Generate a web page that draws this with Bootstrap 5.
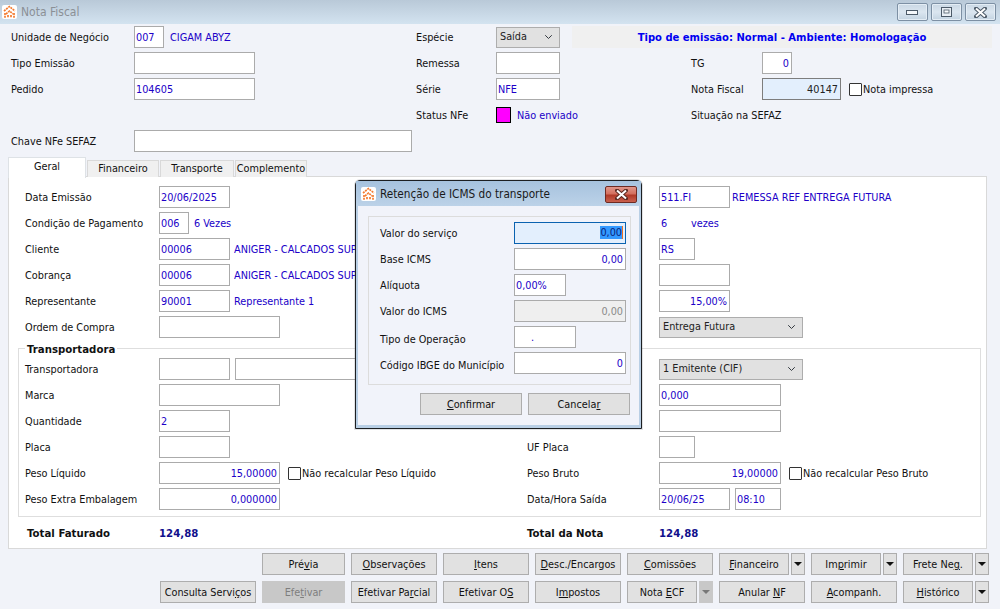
<!DOCTYPE html>
<html lang="pt-BR">
<head>
<meta charset="utf-8">
<title>Nota Fiscal</title>
<link href="https://cdn.jsdelivr.net/npm/bootstrap@5.3.0/dist/css/bootstrap.min.css" rel="stylesheet">
<style>
html,body{margin:0;height:100%;overflow:hidden;background:#f1f3f9}
body{font-family:"DejaVu Sans Condensed","Liberation Sans",sans-serif;font-size:10.8px;line-height:14px;color:#111}
.winbox{position:relative;width:1000px;height:609px;background:#f1f3f9;overflow:hidden}
.ttlbar{height:24px;background:linear-gradient(#b9c9d8,#d3e3f0);padding-left:2px}
.ttltxt{font-size:12px;color:#8b9096;margin-left:4px}
.logo{width:15px;height:14px;flex:none;background:#fff;border-radius:2px}
.capbtns{gap:3px;margin-right:4px;margin-top:3px;align-self:flex-start}
.capbtn{width:31px;height:18px;border:1px solid #7d90a4;border-radius:2px;background:linear-gradient(#c9d7e4 0,#dbe6f0 50%,#c3d3e1 100%);padding:0;box-shadow:inset 0 0 0 1px #e4edf5}
.hgrid{display:grid;grid-template-columns:123px 282px 80px 195px 71px 1fr;grid-auto-rows:22px;row-gap:4px;align-items:center;padding:2px 8px 0 11px;height:133px;white-space:nowrap}
.pgrid{display:grid;grid-template-columns:134px 368px 132px 1fr;grid-auto-rows:22px;row-gap:4px;align-items:center;white-space:nowrap}
.tx{padding-top:2px}
.tx6{padding-top:6px}
.spanrest{grid-column:span 3}
.blu{color:#2000c8}
.fld.form-control{height:22px;min-height:22px;border:1px solid #ababab;border-radius:0;padding:1px 2px 0 1px;font:inherit;color:#2000c8;background:#fff;box-shadow:none;width:100%}
.fld.alr{text-align:right}
.fld.hi.form-control{background:#e3effd;border-color:#7d7d7d;color:#222}
.fld.off.form-control{background:#efefef;color:#8a8a8a}
.fld.foc.form-control{background:#e3effd;border:1px solid #0a62b0;line-height:18px}
.sel{background:#3399ff;color:#0a1f7a;border-right:1px solid #f07020}
.cmb.form-select{height:21px;min-height:21px;padding:0 16px 0 3px;border:1px solid #adadad;border-radius:0;background-color:#e1e1e1;background-position:right 5px center;background-size:11px 8px;font:inherit;color:#222;box-shadow:none}
.wd30{width:30px!important}.wd36{width:36px!important}.wd46{width:46px!important}.wd52{width:52px!important}.wd62{width:62px!important}.wd64{width:64px!important}.wd71{width:71px!important}.wd79{width:79px!important}.wd112{width:112px!important}.wd121{width:121px!important}.wd122{width:122px!important}.wd144{width:144px!important}.wd200{width:200px!important}.wd278{width:278px!important}
.ml2{margin-left:2px}.ml5{margin-left:5px}.ml6{margin-left:6px}
.banner{margin-left:12px;height:22px;padding-top:1px;background:#f0f0f0;color:#0000f0;font-weight:700;text-align:center;line-height:22px;font-family:"DejaVu Sans",sans-serif;font-size:10px;white-space:nowrap;width:420px}
.stbox{width:15px;height:16px;background:#f0f;border:1px solid #000}
.chk{width:13px;height:13px;border:1px solid #333;border-radius:1px;background:#fff;flex:none;margin-right:1px}
.tabsx{margin-left:8px;border:0;height:20px;position:relative;z-index:2;align-items:flex-end;gap:1px}
.tabsx .nav-link{height:17px;padding:0;border:1px solid #d9d9d9;border-bottom:0;border-radius:0;background:#f0f0f0;color:#111;font-size:10.8px;text-align:center;line-height:16px;margin:0;width:72px;white-space:nowrap}
.tabsx .nav-item:nth-child(3) .nav-link{width:74px}
.tabsx .nav-link.active{height:21px;width:78px;background:#fff;color:#111;line-height:18px;margin-bottom:-1px}
.pnl{margin-left:8px;width:979px;height:373px;background:#fff;border:1px solid #d9d9d9;padding-top:9px;margin-top:-1px}
.lft{margin-left:16px}
.grp{position:relative;margin:10px 0 0 9px;width:963px;height:169px;border:1px solid #dedede;padding:9px 0 0 6px}
.lgd{position:absolute;left:6px;top:-6px;background:#fff;padding:0 2px;font-weight:700;font-family:"DejaVu Sans",sans-serif;font-size:10.2px;line-height:13px}
.tot{margin-top:5px;font-weight:700;font-family:"DejaVu Sans",sans-serif;font-size:10.2px}
.tot1{padding-left:2px}
.totv{color:#10108c}
.lnk{white-space:nowrap;overflow:hidden}
.barbtns{padding:4px 11px 0 0;gap:6px}
.barbtns.nxt{padding-top:6px}
.wbtn.btn{height:22px;padding:2px 0 0;border:1px solid #adadad;border-radius:0;background:#e1e1e1;color:#111;font-size:10.8px;line-height:16px;white-space:nowrap}
.wbtn.btn:disabled{opacity:1;background:#c8c8c8;border-color:#c8c8c8;color:#7e7e7e}
.w83{width:83px}.w86{width:86px}.w70{width:70px}.w96{width:96px}.w14{width:14px}.w102{width:102px}
.splt{gap:2px}
.tri{display:inline-block;width:0;height:0;border-left:4px solid transparent;border-right:4px solid transparent;border-top:4px solid #111;vertical-align:2px}
.wbtn.btn:disabled .tri{border-top-color:#777}
.dlg{position:absolute;left:355px;top:180px;width:287px;height:249px;z-index:5;background:#b9cfe5;border:1px solid #1c1f22;border-radius:5px 5px 0 0;box-shadow:0 0 0 1px rgba(60,70,80,.15)}
.dlgttl{height:25px;background:linear-gradient(#a6c2de,#bcd2e8);padding-left:5px}
.dlgtxt{font-size:11.7px;color:#1a1a1a;margin-left:4px;padding-top:1px;white-space:nowrap}
.dlgx{width:32px;height:17px;margin:5px 4px 0 auto;align-self:flex-start;border:1px solid #6e2a22;border-radius:2px;background:linear-gradient(#e0968a 0,#d4705f 45%,#b03a28 55%,#c9604e 100%);padding:0}
.dlgbody{margin:0 2px 2px;height:219px;background:#f1f3fa;padding:10px 0 0 10px}
.frm{width:263px;height:169px;border:1px solid #dcdcdc;padding:5px 0 0 11px;display:grid;grid-template-columns:134px 112px;grid-auto-rows:22px;row-gap:4px;align-items:center;white-space:nowrap}
.dlgbtns{gap:6px;margin:8px 0 0 52px}
</style>
</head>
<body>
<div class="winbox">
  <div class="ttlbar d-flex align-items-center">
    <svg class="logo" viewBox="0 0 15 14"><g fill="none" stroke="#f47b30" stroke-width="1.7" stroke-dasharray="2 .8"><path d="M2 6 7.5 1.5 13 6"/><path d="M4 9 7.5 6 11 9"/><path d="M3 8v5M6 10v3M9 10v3M12 8v5"/></g></svg>
    <span class="ttltxt">Nota Fiscal</span>
    <div class="capbtns d-flex ms-auto">
      <button type="button" class="capbtn d-flex align-items-center justify-content-center" aria-label="Minimizar"><svg width="13" height="8" viewBox="0 0 13 8"><rect x=".5" y="2.5" width="11" height="4" fill="#f4f7fa" stroke="#4c5a68"/></svg></button>
      <button type="button" class="capbtn d-flex align-items-center justify-content-center" aria-label="Maximizar"><svg width="11" height="10" viewBox="0 0 11 10"><rect x=".5" y=".5" width="10" height="9" fill="#e8eef4" stroke="#4c5a68"/><rect x="3" y="3" width="5" height="3" fill="#f8fafc" stroke="#4c5a68" stroke-width=".8"/></svg></button>
      <button type="button" class="capbtn d-flex align-items-center justify-content-center" aria-label="Fechar"><svg width="13" height="11" viewBox="0 0 13 11"><path d="M2 1.5 11 9.5M11 1.5 2 9.5" stroke="#4c5a68" stroke-width="4" stroke-linecap="round"/><path d="M2 1.5 11 9.5M11 1.5 2 9.5" stroke="#fff" stroke-width="2"/></svg></button>
    </div>
  </div>

  <div class="hgrid">
    <span class="tx">Unidade de Negócio</span>
    <div class="d-flex align-items-center"><input class="form-control fld wd30" value="007"><span class="blu tx ml6">CIGAM ABYZ</span></div>
    <span class="tx">Espécie</span>
    <div class="d-flex align-items-center spanrest"><select class="form-select cmb wd64"><option>Saída</option></select><div class="banner">Tipo de emissão: Normal - Ambiente: Homologação</div></div>

    <span class="tx">Tipo Emissão</span>
    <div><input class="form-control fld wd121" value=""></div>
    <span class="tx">Remessa</span>
    <div><input class="form-control fld wd64" value=""></div>
    <span class="tx">TG</span>
    <div><input class="form-control fld alr wd30" value="0"></div>

    <span class="tx">Pedido</span>
    <div><input class="form-control fld wd121" value="104605"></div>
    <span class="tx">Série</span>
    <div><input class="form-control fld wd64" value="NFE"></div>
    <span class="tx">Nota Fiscal</span>
    <div class="d-flex align-items-center"><input class="form-control fld hi alr wd79" value="40147"><span class="chk ms-2"></span><span class="tx">Nota impressa</span></div>

    <span></span><span></span>
    <span class="tx">Status NFe</span>
    <div class="d-flex align-items-center"><span class="stbox"></span><span class="blu tx ml6">Não enviado</span></div>
    <span class="tx">Situação na SEFAZ</span><span></span>

    <span class="tx">Chave NFe SEFAZ</span>
    <div><input class="form-control fld wd278" value=""></div>
  </div>

  <ul class="nav nav-tabs tabsx">
    <li class="nav-item"><a class="nav-link active" href="#">Geral</a></li>
    <li class="nav-item"><a class="nav-link" href="#">Financeiro</a></li>
    <li class="nav-item"><a class="nav-link" href="#">Transporte</a></li>
    <li class="nav-item"><a class="nav-link" href="#">Complemento</a></li>
  </ul>

  <div class="pnl">
    <div class="pgrid lft">
      <span class="tx">Data Emissão</span><div><input class="form-control fld wd71" value="20/06/2025"></div>
      <span></span><div class="d-flex align-items-center"><input class="form-control fld wd71" value="511.FI"><span class="blu tx ml2">REMESSA REF ENTREGA FUTURA</span></div>

      <span class="tx">Condição de Pagamento</span><div class="d-flex align-items-center"><input class="form-control fld wd30" value="006"><span class="blu tx ml5">6 Vezes</span></div>
      <span></span><div class="blu d-flex tx"><span class="wd30 ml2">6</span><span>vezes</span></div>

      <span class="tx">Cliente</span><div class="d-flex align-items-center"><input class="form-control fld wd71" value="00006"><span class="blu tx lnk ms-1">ANIGER - CALCADOS SUP</span></div>
      <span></span><div><input class="form-control fld wd36" value="RS"></div>

      <span class="tx">Cobrança</span><div class="d-flex align-items-center"><input class="form-control fld wd71" value="00006"><span class="blu tx lnk ms-1">ANIGER - CALCADOS SUP</span></div>
      <span></span><div><input class="form-control fld wd71" value=""></div>

      <span class="tx">Representante</span><div class="d-flex align-items-center"><input class="form-control fld wd71" value="90001"><span class="blu tx ms-1">Representante 1</span></div>
      <span></span><div><input class="form-control fld alr wd71" value="15,00%"></div>

      <span class="tx">Ordem de Compra</span><div><input class="form-control fld wd121" value=""></div>
      <span></span><div><select class="form-select cmb wd144"><option>Entrega Futura</option></select></div>
    </div>

    <div class="grp">
      <div class="lgd">Transportadora</div>
      <div class="pgrid">
        <span class="tx">Transportadora</span><div class="d-flex align-items-center"><input class="form-control fld wd71" value=""><input class="form-control fld wd200 ml5" value=""></div>
        <span></span><div><select class="form-select cmb wd144"><option>1 Emitente (CIF)</option></select></div>

        <span class="tx">Marca</span><div><input class="form-control fld wd121" value=""></div>
        <span></span><div><input class="form-control fld wd122" value="0,000"></div>

        <span class="tx">Quantidade</span><div><input class="form-control fld wd71" value="2"></div>
        <span></span><div><input class="form-control fld wd122" value=""></div>

        <span class="tx">Placa</span><div><input class="form-control fld wd71" value=""></div>
        <span class="tx">UF Placa</span><div><input class="form-control fld wd36" value=""></div>

        <span class="tx">Peso Líquido</span><div class="d-flex align-items-center"><input class="form-control fld alr wd121" value="15,00000"><span class="chk ms-2"></span><span class="tx">Não recalcular Peso Líquido</span></div>
        <span class="tx">Peso Bruto</span><div class="d-flex align-items-center"><input class="form-control fld alr wd122" value="19,00000"><span class="chk ms-2"></span><span class="tx">Não recalcular Peso Bruto</span></div>

        <span class="tx">Peso Extra Embalagem</span><div><input class="form-control fld alr wd121" value="0,000000"></div>
        <span class="tx">Data/Hora Saída</span><div class="d-flex align-items-center"><input class="form-control fld wd71" value="20/06/25"><input class="form-control fld wd46 ml5" value="08:10"></div>
      </div>
    </div>

    <div class="pgrid lft tot">
      <span class="tx tot1">Total Faturado</span><span class="tx totv">124,88</span>
      <span class="tx">Total da Nota</span><span class="tx totv">124,88</span>
    </div>
  </div>

  <div class="barbtns d-flex justify-content-end">
    <button type="button" class="btn wbtn w83">Pré<u>v</u>ia</button>
    <button type="button" class="btn wbtn w86"><u>O</u>bservações</button>
    <button type="button" class="btn wbtn w86"><u>I</u>tens</button>
    <button type="button" class="btn wbtn w86"><u>D</u>esc./Encargos</button>
    <button type="button" class="btn wbtn w86"><u>C</u>omissões</button>
    <div class="d-flex splt"><button type="button" class="btn wbtn w70"><u>F</u>inanceiro</button><button type="button" class="btn wbtn w14" aria-label="Mais"><span class="tri"></span></button></div>
    <div class="d-flex splt"><button type="button" class="btn wbtn w70">Im<u>p</u>rimir</button><button type="button" class="btn wbtn w14" aria-label="Mais"><span class="tri"></span></button></div>
    <div class="d-flex splt"><button type="button" class="btn wbtn w70">Frete Ne<u>g</u>.</button><button type="button" class="btn wbtn w14" aria-label="Mais"><span class="tri"></span></button></div>
  </div>
  <div class="barbtns nxt d-flex justify-content-end">
    <button type="button" class="btn wbtn w96">Consulta Servi<u>ç</u>os</button>
    <button type="button" class="btn wbtn w83" disabled>Efe<u>t</u>ivar</button>
    <button type="button" class="btn wbtn w86">Efetivar Pa<u>r</u>cial</button>
    <button type="button" class="btn wbtn w86">Efetivar O<u>S</u></button>
    <button type="button" class="btn wbtn w86">I<u>m</u>postos</button>
    <div class="d-flex splt"><button type="button" class="btn wbtn w70">Nota <u>E</u>CF</button><button type="button" class="btn wbtn w14" disabled aria-label="Mais"><span class="tri"></span></button></div>
    <button type="button" class="btn wbtn w86">Anular <u>N</u>F</button>
    <button type="button" class="btn wbtn w86"><u>A</u>companh.</button>
    <div class="d-flex splt"><button type="button" class="btn wbtn w70"><u>H</u>istórico</button><button type="button" class="btn wbtn w14" aria-label="Mais"><span class="tri"></span></button></div>
  </div>

  <div class="dlg">
    <div class="dlgttl d-flex align-items-center">
      <svg class="logo" viewBox="0 0 15 14"><g fill="none" stroke="#f47b30" stroke-width="1.7" stroke-dasharray="2 .8"><path d="M2 6 7.5 1.5 13 6"/><path d="M4 9 7.5 6 11 9"/><path d="M3 8v5M6 10v3M9 10v3M12 8v5"/></g></svg>
      <span class="dlgtxt">Retenção de ICMS do transporte</span>
      <button type="button" class="dlgx d-flex align-items-center justify-content-center" aria-label="Fechar"><svg width="13" height="11" viewBox="0 0 13 11"><path d="M2 1.5 11 9.5M11 1.5 2 9.5" stroke="#5a2a22" stroke-width="4" stroke-linecap="round"/><path d="M2 1.5 11 9.5M11 1.5 2 9.5" stroke="#fff" stroke-width="2"/></svg></button>
    </div>
    <div class="dlgbody">
      <div class="frm">
        <span class="tx">Valor do serviço</span><div class="form-control fld foc alr"><span class="sel">0,00</span></div>
        <span class="tx">Base ICMS</span><input class="form-control fld alr" value="0,00">
        <span class="tx">Alíquota</span><input class="form-control fld wd52" value="0,00%">
        <span class="tx">Valor do ICMS</span><input class="form-control fld off alr" value="0,00">
        <span class="tx6">Tipo de Operação</span><input class="form-control fld wd62 ps-3" value=".">
        <span class="tx6">Código IBGE do Município</span><input class="form-control fld alr" value="0">
      </div>
      <div class="dlgbtns d-flex">
        <button type="button" class="btn wbtn w102"><u>C</u>onfirmar</button>
        <button type="button" class="btn wbtn w102">Cancela<u>r</u></button>
      </div>
    </div>
  </div>
</div>
</body>
</html>
